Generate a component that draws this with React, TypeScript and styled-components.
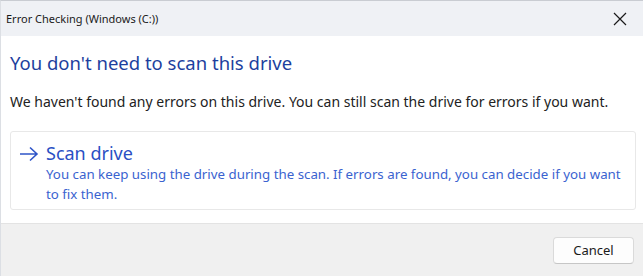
import React from 'react';
import styled, { createGlobalStyle } from 'styled-components';

const GlobalStyle = createGlobalStyle`
  html, body {
    margin: 0;
    padding: 0;
    background: #ffffff;
  }
  body {
    font-family: 'Noto Sans', 'Open Sans', sans-serif;
  }
`;

const App = () => {
  return (
    <Dialog>
      <GlobalStyle />
      <TitleBar>
        <Title>Error Checking (Windows (C:))</Title>
        <CloseButton aria-label='Close'>
          <svg width='14' height='14' viewBox='0 0 14 14'>
            <path d='M1 1 L13 13 M13 1 L1 13' stroke='#1a1a1a' strokeWidth='1.2' fill='none' />
          </svg>
        </CloseButton>
      </TitleBar>
      <Body>
        <Heading>You don't need to scan this drive</Heading>
        <Message>
          We haven't found any errors on this drive. You can still scan the drive for errors if you want.
        </Message>
        <CommandLink>
          <Arrow>
            <svg width='20' height='16' viewBox='0 0 20 16'>
              <path d='M1 8 H18 M11 1.5 L18 8 L11 14.5' stroke='currentColor' strokeWidth='1.6' fill='none' />
            </svg>
          </Arrow>
          <LinkText>
            <LinkTitle>Scan drive</LinkTitle>
            <LinkNote>
              You can keep using the drive during the scan. If errors are found, you can decide if you want
              to fix them.
            </LinkNote>
          </LinkText>
        </CommandLink>
      </Body>
      <Footer>
        <Button>Cancel</Button>
      </Footer>
    </Dialog>
  );
};

export default App;

const Dialog = styled.div`
  width: 643px;
  height: 276px;
  display: flex;
  flex-direction: column;
  background: #ffffff;
  border-top: 1px solid #c9ccd2;
  border-left: 1px solid #dcdfe4;
  box-sizing: border-box;
  overflow: hidden;
`;

const TitleBar = styled.div`
  display: flex;
  align-items: center;
  justify-content: space-between;
  height: 35px;
  padding: 0 0 0 5px;
  background: #eff1f5;
`;

const Title = styled.div`
  font-size: 11px;
  color: #1a1a1a;
`;

const CloseButton = styled.div`
  display: flex;
  align-items: center;
  justify-content: center;
  width: 46px;
  height: 35px;
`;

const Body = styled.div`
  flex: 1;
  padding: 14px 7px 0 9px;
`;

const Heading = styled.div`
  font-size: 18.5px;
  color: #1d3f9e;
  line-height: 26px;
`;

const Message = styled.div`
  margin-top: 16px;
  font-size: 14px;
  color: #222222;
  line-height: 20px;
`;

const CommandLink = styled.div`
  display: flex;
  align-items: flex-start;
  gap: 7px;
  margin-top: 19px;
  padding: 10px 2px 5px 8px;
  border: 1px solid #e8e8e8;
  border-radius: 3px;
  color: #2d55cc;
`;

const Arrow = styled.div`
  padding-top: 3px;
  color: #2f55c8;
`;

const LinkText = styled.div`
  display: flex;
  flex-direction: column;
`;

const LinkTitle = styled.div`
  font-size: 18px;
  line-height: 22px;
  color: #2a4fc4;
`;

const LinkNote = styled.div`
  font-size: 13.3px;
  line-height: 20px;
  color: #3a63d0;
`;

const Footer = styled.div`
  display: flex;
  justify-content: flex-end;
  align-items: center;
  height: 52px;
  padding: 0 9px;
  background: #f0f0f0;
  border-top: 1px solid #e3e3e3;
`;

const Button = styled.button`
  width: 81px;
  height: 27px;
  font-family: 'Noto Sans', 'Open Sans', sans-serif;
  font-size: 13px;
  color: #1a1a1a;
  background: #fdfdfd;
  border: 1px solid #dadada;
  border-bottom-color: #c6c6c6;
  border-radius: 4px;
`;
